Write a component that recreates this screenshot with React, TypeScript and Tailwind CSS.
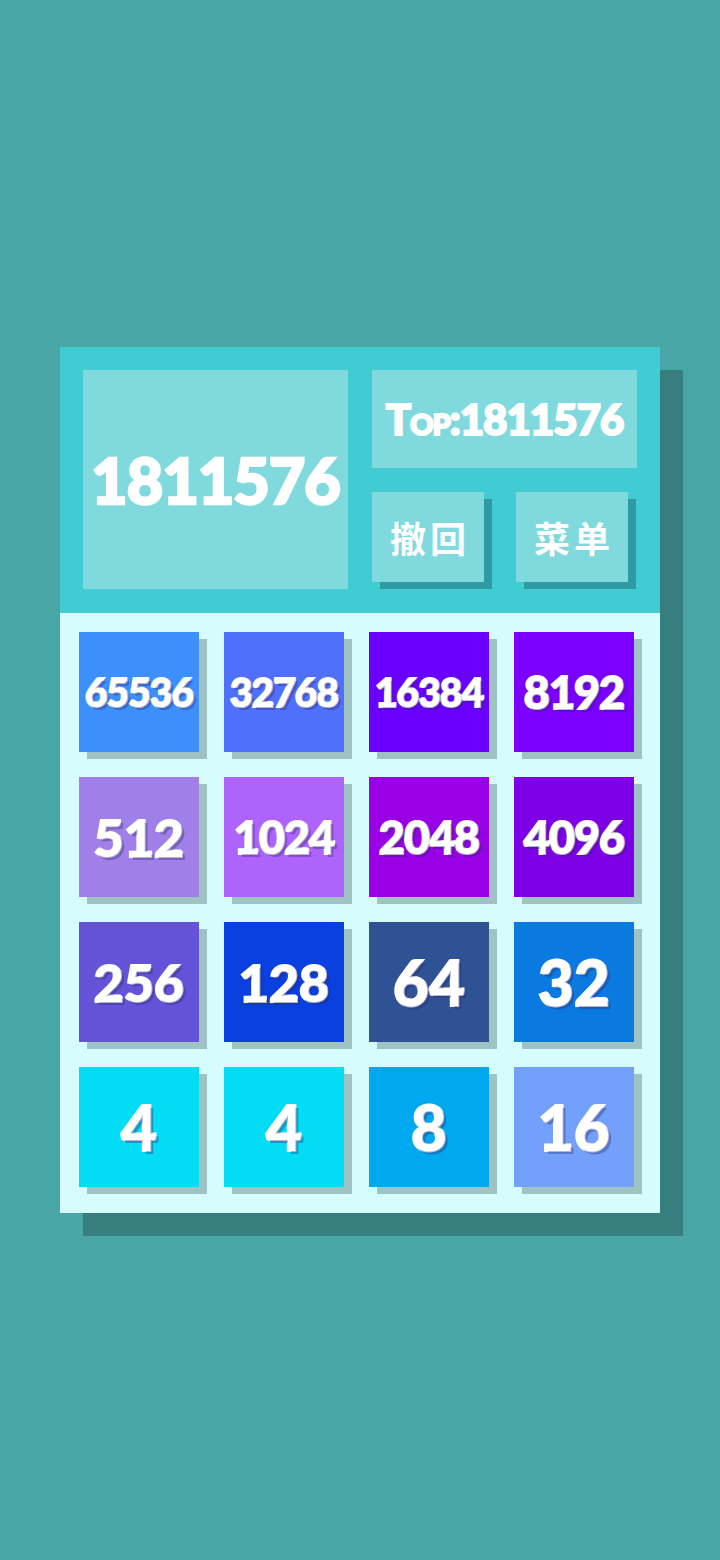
const tiles = [
  { v: 65536, bg: "bg-[#3d8ffb]" },
  { v: 32768, bg: "bg-[#5070fb]" },
  { v: 16384, bg: "bg-[#6a00ff]" },
  { v: 8192, bg: "bg-[#7b00fd]" },
  { v: 512, bg: "bg-[#a080e8]" },
  { v: 1024, bg: "bg-[#ae63fc]" },
  { v: 2048, bg: "bg-[#9a00e6]" },
  { v: 4096, bg: "bg-[#7e00e6]" },
  { v: 256, bg: "bg-[#6453d8]" },
  { v: 128, bg: "bg-[#0a40e0]" },
  { v: 64, bg: "bg-[#2e5294]" },
  { v: 32, bg: "bg-[#0b7ae0]" },
  { v: 4, bg: "bg-[#02dcf4]" },
  { v: 4, bg: "bg-[#02dcf4]" },
  { v: 8, bg: "bg-[#00a8f0]" },
  { v: 16, bg: "bg-[#72a0fb]" },
];

const sizeFor = (n: number) => {
  const len = String(n).length;
  if (len >= 5) return "text-[39px] tracking-[-1px]";
  if (len === 4) return "text-[45px] tracking-[-1px]";
  if (len === 3) return "text-[52px]";
  return "text-[62px]";
};

const Tile = ({ v, bg }: { v: number; bg: string }) => (
  <div
    className={`${bg} h-[120px] w-[120px] flex items-center justify-center shadow-[8px_7px_0_#9fc3c3]`}
  >
    <span
      className={`${sizeFor(v)} font-black text-white leading-none [-webkit-text-stroke:2px_white] [paint-order:stroke_fill] [text-shadow:3px_3px_0_rgba(40,40,110,0.35)]`}
    >
      {v}
    </span>
  </div>
);

export default function App() {
  return (
    <div className="min-h-[1560px] w-full bg-[#48a6a7] pt-[347px] pl-[60px] font-['Lato','Noto_Sans_CJK_SC',sans-serif]">
      <div className="w-[600px] shadow-[23px_23px_0_#377f7e]">
        {/* header */}
        <div className="bg-[#40ccd2] h-[266px] p-[23px] flex gap-[24px]">
          <div className="w-[265px] h-[219px] bg-[#80dadd] flex items-center justify-center">
            <span className="text-[63px] font-black text-white leading-none tracking-[-1px] [-webkit-text-stroke:2.5px_white]">
              1811576
            </span>
          </div>
          <div className="w-[265px] flex flex-col gap-[24px]">
            <div className="h-[98px] bg-[#80dadd] flex items-center justify-center">
              <span className="text-[42px] font-black text-white leading-none tracking-[-1px] [font-variant:small-caps] [-webkit-text-stroke:2px_white]">
                Top:1811576
              </span>
            </div>
            <div className="flex gap-[32px]">
              <button className="w-[112px] h-[90px] bg-[#80dadd] shadow-[8px_7px_0_#2e9aa1] flex items-center justify-center text-white text-[36px] font-bold tracking-[4px] pl-[4px] font-['Noto_Sans_CJK_SC',sans-serif]">
                撤回
              </button>
              <button className="w-[112px] h-[90px] bg-[#80dadd] shadow-[8px_7px_0_#2e9aa1] flex items-center justify-center text-white text-[36px] font-bold tracking-[4px] pl-[4px] font-['Noto_Sans_CJK_SC',sans-serif]">
                菜单
              </button>
            </div>
          </div>
        </div>
        {/* board */}
        <div className="bg-[#d6fdfc] pt-[19px] pl-[19px] pr-[26px] pb-[26px] grid grid-cols-4 gap-[25px]">
          {tiles.map((t, i) => (
            <Tile key={i} v={t.v} bg={t.bg} />
          ))}
        </div>
      </div>
    </div>
  );
}
